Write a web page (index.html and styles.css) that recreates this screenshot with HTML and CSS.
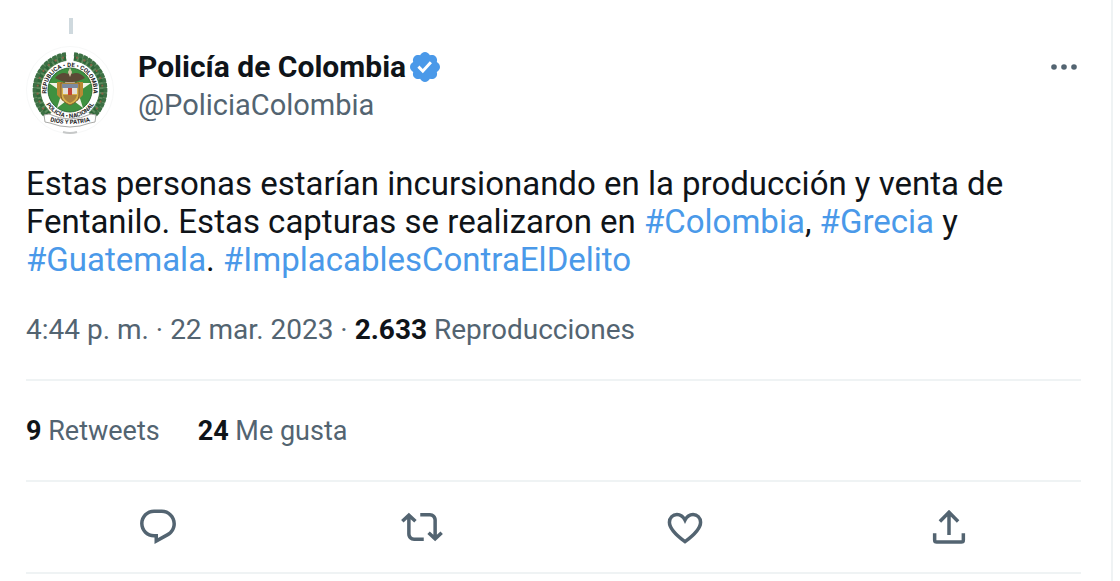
FILE: index.html
```html
<!DOCTYPE html>
<html lang="es">
<head>
    <meta charset="UTF-8">
    <meta name="viewport" content="width=device-width, initial-scale=1.0">
    <title>Policía de Colombia</title>
    <link rel="stylesheet" href="styles.css">
</head>
<body>
    <article class="tweet">
        <div class="thread-line"></div>

        <header class="tweet-header">
            <a href="#" class="avatar" aria-label="Policía de Colombia">
                <svg viewBox="0 0 88 88">
                    <defs>
                        <path id="ringTop" d="M24.500 57.500A23.500 23.500 0 1 1 63.500 57.500"/>
                        <path id="ringBottom" d="M16 44A28 28 0 0 0 72 44"/>
                        <path id="ribbonText" d="M20 74Q44 82 68 74"/>
                    </defs>
                    <circle cx="44" cy="44" r="43.5" fill="#fff" stroke="#f7f8f8"/>
                    <!-- laurel wreath -->
                    <g fill="none">
                        <path d="M40 11.300A33 33 0 0 0 23 69.500M48 11.300A33 33 0 0 1 65 69.500" stroke="#5c8a5c" stroke-width="8"/>
                        <path d="M40 8.300A36 36 0 0 0 22 72M48 8.300A36 36 0 0 1 66 72" stroke="#3d7045" stroke-width="4" stroke-dasharray="4 1"/>
                        <path d="M40 12.300A32 32 0 0 0 23 68M48 12.300A32 32 0 0 1 65 68" stroke="#2f6639" stroke-width="4" stroke-dasharray="3 2"/>
                        <path d="M38 11.500A33 33 0 0 0 23 69M50 11.500A33 33 0 0 1 65 69" stroke="#8c6448" stroke-width="2" stroke-dasharray="2 6"/>
                    </g>
                    <circle cx="44" cy="44" r="29" fill="#fff"/>
                    <circle cx="44" cy="44" r="22" fill="#3f9140" stroke="#2d6b35"/>
                    <path d="M44 22l5 15h16L52 46l5 16-13-10-13 10 5-16-13-9h16z" fill="#f3f4e8"/>
                    <!-- condor and shield -->
                    <path d="M29 32c4-5 9-6 13-4l2-5 2 5c4-2 9-1 13 4-4 2-8 4-12 4h-6c-4 0-8-2-12-4z" fill="#5b4a35"/>
                    <path d="M42 26l2-4 2 4-2 5z" fill="#d9c9a8"/>
                    <path d="M31 36h6v19l-6-6zM57 36h-6v19l6-6z" fill="#b98a35"/>
                    <path d="M35 37h18v12c0 5-4 8-9 10-5-2-9-5-9-10z" fill="#d8b14a" stroke="#7c5b30"/>
                    <path d="M36 38h16v4H36z" fill="#7c8aa0"/>
                    <path d="M37 42h14v6H37z" fill="#e4e0d8"/>
                    <path d="M42 42h4v7h-4z" fill="#c44436"/>
                    <path d="M37 49h14c-1 4-3 6-7 8-4-2-6-4-7-8z" fill="#a9803f"/>
                    <g class="seal-text">
                        <text><textPath href="#ringTop" startOffset="50%" text-anchor="middle">REPÚBLICA • DE • COLOMBIA</textPath></text>
                        <text><textPath href="#ringBottom" startOffset="50%" text-anchor="middle">POLICÍA • NACIONAL</textPath></text>
                    </g>
                    <path d="M18 69l5-1q21 10 42 0l5 1-1 7-5 1q-20 8-40 0l-5-1z" fill="#fff" stroke="#a9aaa7"/>
                    <text class="seal-text"><textPath href="#ribbonText" startOffset="50%" text-anchor="middle">DIOS Y PATRIA</textPath></text>
                    <path d="M37 86q7 2 14 0" fill="none" stroke="#c6c8c8" stroke-width="2"/>
                </svg>
            </a>
            <div class="author">
                <a href="#" class="author-name">
                    Policía de Colombia
                    <svg class="verified" viewBox="1.75 1.75 20.5 20.5" role="img" aria-label="Cuenta verificada"><path d="M22.25 12c0-1.43-.88-2.67-2.19-3.34.46-1.39.2-2.9-.81-3.91s-2.52-1.27-3.91-.81c-.66-1.31-1.91-2.19-3.34-2.19s-2.67.88-3.33 2.19c-1.4-.46-2.91-.2-3.92.81s-1.26 2.52-.8 3.91c-1.31.67-2.2 1.91-2.2 3.34s.89 2.67 2.2 3.34c-.46 1.39-.21 2.9.8 3.91s2.52 1.26 3.91.81c.67 1.31 1.91 2.19 3.34 2.19s2.68-.88 3.34-2.19c1.39.45 2.9.2 3.91-.81s1.27-2.52.81-3.91c1.31-.67 2.19-1.91 2.19-3.34zm-11.71 4.2L6.8 12.46l1.41-1.42 2.26 2.26 4.8-5.23 1.47 1.36-6.2 6.77z"/></svg>
                </a>
                <a href="#" class="author-handle">@PoliciaColombia</a>
            </div>
            <button type="button" class="more-btn" aria-label="Más opciones">
                <svg viewBox="0 0 28 6"><circle cx="4" cy="3" r="2.8"/><circle cx="14" cy="3" r="2.8"/><circle cx="24" cy="3" r="2.8"/></svg>
            </button>
        </header>

        <p class="tweet-text">Estas personas estarían incursionando en la producción y venta de Fentanilo. Estas capturas se realizaron en <a href="#">#Colombia</a>, <a href="#">#Grecia</a> y <a href="#">#Guatemala</a>. <a href="#">#ImplacablesContraElDelito</a></p>

        <div class="tweet-meta">
            <a href="#">4:44 p. m. · 22 mar. 2023</a> · <strong>2.633</strong> Reproducciones
        </div>

        <div class="tweet-stats">
            <a href="#"><strong>9</strong> Retweets</a>
            <a href="#"><strong>24</strong> Me gusta</a>
        </div>

        <div class="tweet-actions">
            <button type="button" aria-label="Responder">
                <svg viewBox="0 0 24 24"><path d="M1.751 10c0-4.42 3.584-8 8.005-8h4.366c4.49 0 8.129 3.64 8.129 8.13 0 2.96-1.607 5.68-4.196 7.11l-8.054 4.46v-3.69h-.067c-4.49.1-8.183-3.51-8.183-8.01zm8.005-6c-3.317 0-6.005 2.69-6.005 6 0 3.37 2.77 6.08 6.138 6.01l.351-.01h1.761v2.3l5.087-2.81c1.951-1.08 3.163-3.13 3.163-5.36 0-3.39-2.744-6.13-6.129-6.13H9.756z"/></svg>
            </button>
            <button type="button" aria-label="Retwittear">
                <svg viewBox="0 0 24 24"><path d="M4.5 3.88l4.432 4.14-1.364 1.46L5.5 7.55V16c0 1.1.896 2 2 2H13v2H7.5c-2.209 0-4-1.79-4-4V7.55L1.432 9.48.068 8.02 4.5 3.88zM16.5 6H11V4h5.5c2.209 0 4 1.79 4 4v8.45l2.068-1.93 1.364 1.46-4.432 4.14-4.432-4.14 1.364-1.46 2.068 1.93V8c0-1.1-.896-2-2-2z"/></svg>
            </button>
            <button type="button" aria-label="Me gusta">
                <svg class="icon-line" viewBox="0 0 24 24"><path d="M12 20.4C9 18.2 3.1 13.7 3.1 9.3c0-2.6 2-4.5 4.3-4.5 2 0 3.6 1.2 4.6 3.2 1-2 2.6-3.2 4.6-3.2 2.3 0 4.3 1.9 4.3 4.5 0 4.4-5.9 8.9-8.9 11.1z"/></svg>
            </button>
            <button type="button" aria-label="Compartir">
                <svg class="icon-line" viewBox="0 0 24 24"><path d="M12 16.6V3.8M6.8 8.8L12 3.6l5.2 5.2M3.8 15.6v3.8c0 .7.5 1.2 1.2 1.2h14c.7 0 1.2-.5 1.2-1.2v-3.8"/></svg>
            </button>
        </div>
    </article>
</body>
</html>
```
FILE: styles.css
```css
* {
    margin: 0;
    padding: 0;
    box-sizing: border-box;
}

body {
    font-family: Roboto, "Liberation Sans", Arial, sans-serif;
    font-size: 28px;
    line-height: 38px;
    color: #536471;
    background: #fff;
}

a {
    color: inherit;
    text-decoration: none;
}

button {
    border: none;
    background: none;
    cursor: pointer;
}

strong {
    color: #0f1419;
}

.tweet {
    min-height: 100vh;
    margin-right: 7px;
    padding: 18px 30px 0 26px;
    border-right: 2px solid #eff3f4;
}

.thread-line {
    width: 4px;
    height: 16px;
    margin: 0 0 12px 43px;
    background: #cfd9de;
}

.tweet-header {
    display: flex;
    align-items: flex-start;
    gap: 24px;
}

.avatar {
    flex: none;
    width: 88px;
    height: 88px;
}

.avatar svg {
    display: block;
}

.seal-text {
    font-size: 6px;
    font-weight: bold;
    fill: #222;
}

.author {
    flex: 1;
    display: flex;
    flex-direction: column;
    align-items: flex-start;
    padding-top: 2px;
}

.author-name {
    display: flex;
    align-items: center;
    gap: 4px;
    font-size: 30px;
    font-weight: bold;
    color: #0f1419;
}

.author-handle {
    font-size: 29px;
}

.verified {
    width: 30px;
    height: 30px;
    fill: #4a99e9;
}

.more-btn {
    padding: 18px 3px;
}

.more-btn svg {
    display: block;
    width: 28px;
    height: 6px;
    fill: #536471;
}

.tweet-text {
    margin-top: 31px;
    font-size: 33px;
    color: #0f1419;
}

.tweet-text a {
    color: #4a99e9;
}

.tweet-meta {
    padding: 32px 0 30px;
    border-bottom: 2px solid #eff3f4;
}

.tweet-stats {
    display: flex;
    gap: 38px;
    padding: 31px 0 30px;
    font-size: 27px;
    border-bottom: 2px solid #eff3f4;
}

.tweet-actions {
    display: grid;
    grid-template-columns: repeat(4, 1fr);
    justify-items: center;
    padding: 24px 0;
    border-bottom: 2px solid #eff3f4;
}

.tweet-actions svg {
    display: block;
    width: 42px;
    height: 42px;
    fill: #536471;
}

.tweet-actions .icon-line {
    fill: none;
    stroke: #536471;
    stroke-width: 2;
}
```
